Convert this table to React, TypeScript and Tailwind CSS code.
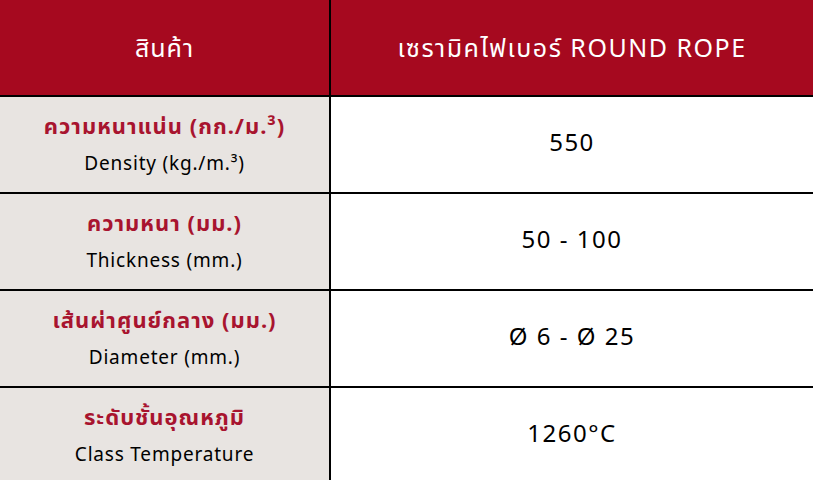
const rows = [
  { th: "ความหนาแน่น (กก./ม.³)", en: "Density (kg./m.³)", value: "550" },
  { th: "ความหนา (มม.)", en: "Thickness (mm.)", value: "50 - 100" },
  { th: "เส้นผ่าศูนย์กลาง (มม.)", en: "Diameter (mm.)", value: "Ø 6 - Ø 25" },
  { th: "ระดับชั้นอุณหภูมิ", en: "Class Temperature", value: "1260°C" },
];

const App = () => {
  return (
    <div
      className="w-[813px] bg-white"
      style={{ fontFamily: '"Noto Sans", "Noto Sans Thai", sans-serif' }}
    >
      <div className="grid grid-cols-[331px_1fr]">
        <div className="h-[97px] bg-[#a6091f] border-r-2 border-b-2 border-black flex items-center justify-center text-white text-[25px] tracking-[1px]">
          สินค้า
        </div>
        <div className="h-[97px] bg-[#a6091f] border-b-2 border-black flex items-center justify-center text-white text-[25px] tracking-[1.5px]">
          เซรามิคไฟเบอร์ ROUND ROPE
        </div>

        {rows.map((row) => (
          <div key={row.en} className="contents">
            <div className="h-[97px] bg-[#e8e4e1] border-r-2 border-b-2 border-black flex flex-col items-center justify-center gap-[12px] pb-[4px]">
              <div className="text-[#a8142f] text-[22px] font-bold leading-[28px] tracking-[1px]">{row.th}</div>
              <div className="text-black text-[19px] leading-[24px] tracking-[0.8px]">{row.en}</div>
            </div>
            <div className="h-[97px] bg-white border-b-2 border-black flex items-center justify-center pb-[5px] text-black text-[24px] tracking-[1.5px] whitespace-pre">
              {row.value}
            </div>
          </div>
        ))}
      </div>
    </div>
  );
};

export default App;
